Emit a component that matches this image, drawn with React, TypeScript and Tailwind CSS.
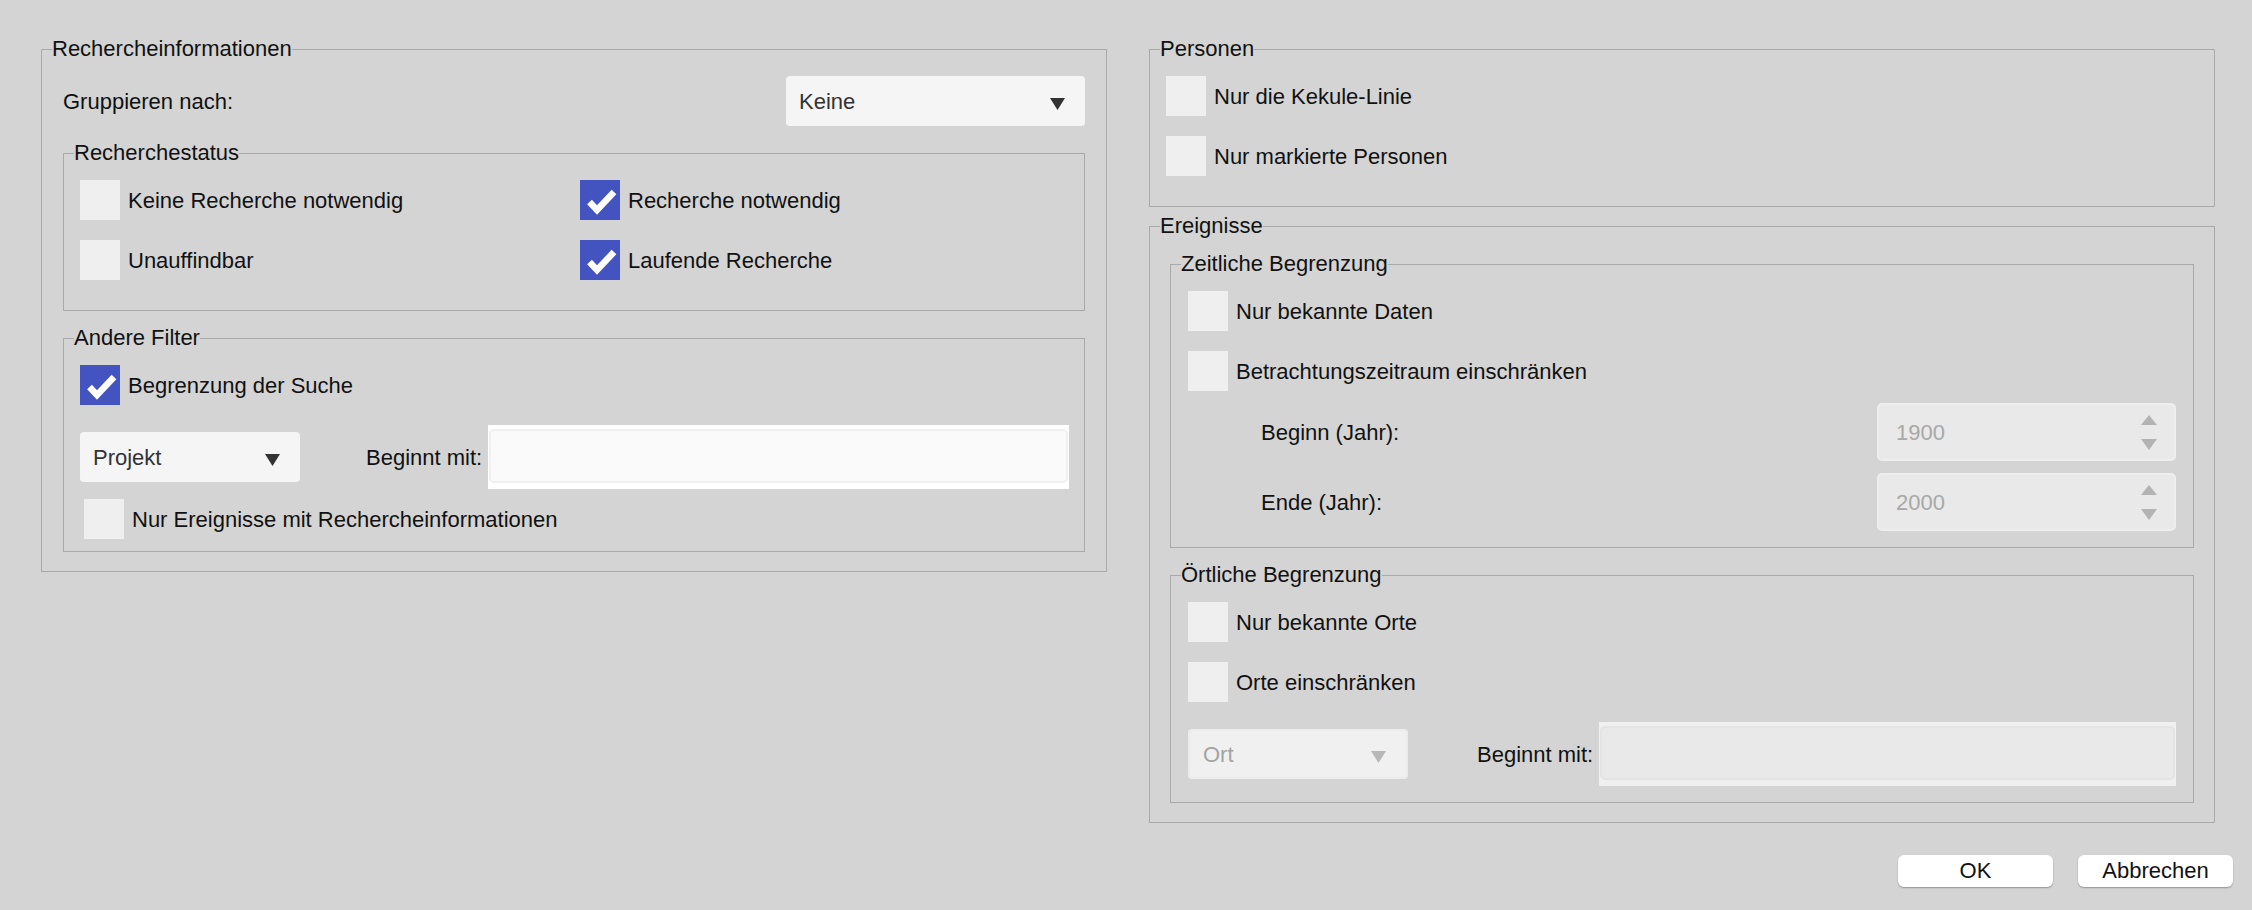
import type { ReactNode } from 'react';

function Group({ title, className = '', children }: { title: string; className?: string; children: ReactNode }) {
  return (
    <fieldset className={`border border-[#a9a9a9] ${className}`}>
      <legend className="ml-[10px] text-[22px] leading-[26px] text-[#111]">{title}</legend>
      {children}
    </fieldset>
  );
}

function Check({ label, checked = false, className = '' }: { label: string; checked?: boolean; className?: string }) {
  return (
    <label className={`flex items-center gap-2 ${className}`}>
      <span
        className={`flex h-10 w-10 flex-shrink-0 items-center justify-center ${checked ? 'bg-[#4354c1]' : 'bg-[#efefef]'}`}
      >
        {checked && (
          <svg width="40" height="40" viewBox="0 0 40 40">
            <path d="M9.5 22 L17 30 L34 12" fill="none" stroke="#fff" strokeWidth="6.5" strokeLinejoin="miter" />
          </svg>
        )}
      </span>
      <span className="text-[22px] text-[#111]">{label}</span>
    </label>
  );
}

function Select({ value, className = '', disabled = false }: { value: string; className?: string; disabled?: boolean }) {
  return (
    <div
      className={`flex h-[50px] items-center justify-between rounded-[4px] pl-[13px] pr-[20px] text-[22px] ${
        disabled ? 'border-2 border-[#ececec] bg-[#f0f0f0] text-[#a3a3a3]' : 'bg-[#f5f5f5] text-[#333]'
      } ${className}`}
    >
      <span>{value}</span>
      <svg width="15" height="12" viewBox="0 0 15 12" className="mt-[6px]">
        <path d="M0 0 H15 L7.5 12 Z" fill={disabled ? '#b8b8b8' : '#333'} />
      </svg>
    </div>
  );
}

function TextField({ disabled = false, className = '' }: { disabled?: boolean; className?: string }) {
  return (
    <div className={`h-[64px] px-[1px] pt-[4px] pb-[6px] ${disabled ? 'bg-[#f0f0f0]' : 'bg-white'} ${className}`}>
      <div
        className={`h-full rounded-[5px] border-2 ${
          disabled ? 'border-[#e4e4e4] bg-[#e9e9e9]' : 'border-[#f0f0f0] bg-[#fafafa]'
        }`}
      />
    </div>
  );
}

function Spinner({ value }: { value: string }) {
  return (
    <div className="flex h-[58px] w-[299px] items-center justify-between rounded-[5px] border-2 border-[#eeeeee] bg-[#e9e9e9] pl-[17px] pr-[17px]">
      <span className="text-[22px] text-[#a8a8a8]">{value}</span>
      <div className="flex flex-col gap-[14px]">
        <svg width="16" height="10" viewBox="0 0 16 10">
          <path d="M8 0 L16 10 H0 Z" fill="#b3b3b3" />
        </svg>
        <svg width="16" height="11" viewBox="0 0 16 11">
          <path d="M0 0 H16 L8 11 Z" fill="#b3b3b3" />
        </svg>
      </div>
    </div>
  );
}

function Button({ children }: { children: ReactNode }) {
  return (
    <button
      type="button"
      className="h-[32px] w-[155px] rounded-[6px] bg-white text-[22px] leading-none text-[#111] shadow-[0_1px_1.5px_rgba(0,0,0,0.3)]"
    >
      {children}
    </button>
  );
}

export default function App() {
  return (
    <div
      className="flex h-[910px] w-full gap-[42px] bg-[#d4d4d4] pl-[41px] pt-[36px]"
      style={{ fontFamily: '"Liberation Sans", Arial, sans-serif' }}
    >
      <Group title="Rechercheinformationen" className="w-[1066px] self-start">
        <div className="px-[21px] pt-[14px] pb-[19px]">
          <div className="flex items-center justify-between">
            <span className="text-[22px] text-[#111]">Gruppieren nach:</span>
            <Select value="Keine" className="w-[299px]" />
          </div>

          <Group title="Recherchestatus" className="mt-[14px]">
            <div className="grid grid-cols-[500px_1fr] gap-y-5 pl-4 pt-[14px] pb-[30px]">
              <Check label="Keine Recherche notwendig" />
              <Check label="Recherche notwendig" checked />
              <Check label="Unauffindbar" />
              <Check label="Laufende Recherche" checked />
            </div>
          </Group>

          <Group title="Andere Filter" className="mt-[14px]">
            <div className="pl-4 pr-[15px] pt-[14px] pb-[12px]">
              <Check label="Begrenzung der Suche" checked />
              <div className="mt-5 flex items-center">
                <Select value="Projekt" className="w-[220px]" />
                <span className="ml-[66px] text-[22px] text-[#111]">Beginnt mit:</span>
                <TextField className="ml-[6px] flex-1" />
              </div>
              <Check label="Nur Ereignisse mit Rechercheinformationen" className="mt-[10px] ml-1" />
            </div>
          </Group>
        </div>
      </Group>

      <div className="flex w-[1084px] flex-col">
        <Group title="Personen" className="w-[1066px]">
          <div className="flex flex-col gap-5 pl-4 pt-[14px] pb-[30px]">
            <Check label="Nur die Kekule-Linie" />
            <Check label="Nur markierte Personen" />
          </div>
        </Group>

        <Group title="Ereignisse" className="mt-[6px] w-[1066px]">
          <div className="px-5 pt-[12px] pb-[19px]">
            <Group title="Zeitliche Begrenzung">
              <div className="flex flex-col px-[17px] pt-[14px] pb-[16px]">
                <Check label="Nur bekannte Daten" />
                <Check label="Betrachtungszeitraum einschränken" className="mt-5" />
                <div className="mt-3 flex items-center justify-between">
                  <span className="pl-[73px] text-[22px] text-[#111]">Beginn (Jahr):</span>
                  <Spinner value="1900" />
                </div>
                <div className="mt-3 flex items-center justify-between">
                  <span className="pl-[73px] text-[22px] text-[#111]">Ende (Jahr):</span>
                  <Spinner value="2000" />
                </div>
              </div>
            </Group>

            <Group title="Örtliche Begrenzung" className="mt-[14px]">
              <div className="flex flex-col px-[17px] pt-[14px] pb-[16px]">
                <Check label="Nur bekannte Orte" />
                <Check label="Orte einschränken" className="mt-5" />
                <div className="mt-5 flex items-center">
                  <Select value="Ort" className="w-[220px]" disabled />
                  <span className="ml-[69px] text-[22px] text-[#111]">Beginnt mit:</span>
                  <TextField className="ml-[6px] flex-1" disabled />
                </div>
              </div>
            </Group>
          </div>
        </Group>

        <div className="mt-[32px] flex justify-end gap-[25px]">
          <Button>OK</Button>
          <Button>Abbrechen</Button>
        </div>
      </div>
    </div>
  );
}
